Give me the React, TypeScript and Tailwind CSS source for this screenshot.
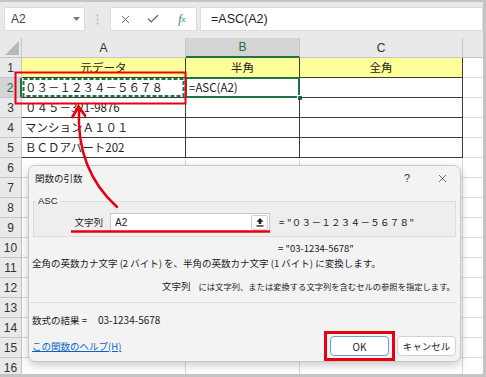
import { X, Check } from "lucide-react";

const JP = "font-['Noto_Sans_CJK_JP','Noto_Sans',sans-serif]";
const UI = "font-['Liberation_Sans','Noto_Sans',sans-serif]";

const data: string[][] = [
  ["元データ", "半角", "全角"],
  ["０３－１２３４－５６７８", "=ASC(A2)", ""],
  ["０４５－321-9876", "", ""],
  ["マンションＡ１０１", "", ""],
  ["ＢＣＤアパート202", "", ""],
];

const colWidths = ["w-[164px]", "w-[114px]", "w-[163px]"];

function FormulaBar() {
  return (
    <div className={`flex h-[36px] items-start bg-[#e9e9e9] pl-[4px] pt-[5px] ${UI}`}>
      <div className="flex h-[24px] w-[81px] items-center justify-between border border-[#dcdcdc] bg-white pl-[6px] pr-[4px] text-[12px] text-[#444]">
        <span>A2</span>
        <svg width="7" height="4" viewBox="0 0 7 4">
          <path d="M0 0h7L3.5 4z" fill="#777" />
        </svg>
      </div>
      <div className="flex h-[24px] w-[25px] items-center justify-center">
        <svg width="3" height="11" viewBox="0 0 3 11">
          <circle cx="1.5" cy="1.5" r="1" fill="#b0b0b0" />
          <circle cx="1.5" cy="5.5" r="1" fill="#b0b0b0" />
          <circle cx="1.5" cy="9.5" r="1" fill="#b0b0b0" />
        </svg>
      </div>
      <div className="flex h-[24px] w-[87px] items-center border border-[#dcdcdc] bg-white">
        <div className="flex w-[29px] justify-center text-[#5a5a5a]">
          <X size={13} strokeWidth={1.6} />
        </div>
        <div className="flex w-[29px] justify-center text-[#5a5a5a]">
          <Check size={14} strokeWidth={2} />
        </div>
        <div className="flex w-[29px] justify-center font-['Liberation_Serif',serif] text-[12px] italic text-[#2e8b57]">
          f<span className="text-[9px] leading-[18px]">x</span>
        </div>
      </div>
      <div className="ml-[3px] flex h-[24px] flex-1 items-center border border-[#dcdcdc] bg-white pl-[10px] text-[12.5px] text-[#222]">
        =ASC(A2)
      </div>
    </div>
  );
}

function ColumnHeader() {
  return (
    <div className={`flex h-[20px] ${UI} text-[12px] text-[#333]`}>
      <div className="flex w-[22px] items-end justify-end border-r border-b border-[#c6c6c6] bg-[#e9e9e9] pb-[2px] pr-[2px]">
        <svg width="14" height="14" viewBox="0 0 14 14">
          <path d="M0 14H14V0z" fill="#b8b8b8" />
        </svg>
      </div>
      <div className={`${colWidths[0]} flex items-center justify-center border-r border-b border-[#c6c6c6] bg-[#e9e9e9]`}>A</div>
      <div className={`${colWidths[1]} flex items-center justify-center border-r border-[#c6c6c6] border-b-2 border-b-[#217346] bg-[#d4d4d4] text-[#217346]`}>B</div>
      <div className={`${colWidths[2]} flex items-center justify-center border-r border-b border-[#c6c6c6] bg-[#e9e9e9]`}>C</div>
      <div className="flex-1 border-b border-[#c6c6c6] bg-[#e9e9e9]" />
    </div>
  );
}

function Row({ n }: { n: number }) {
  const values = data[n - 1] ?? ["", "", ""];
  const inTable = n <= 5;
  const active = n === 2;
  return (
    <div className="flex h-[20px]">
      <div
        className={`flex w-[22px] items-center justify-center border-b border-[#c6c6c6] ${UI} text-[12px] ${
          active
            ? "border-r-2 border-r-[#217346] bg-[#d4d4d4] text-[#217346]"
            : "border-r bg-[#e9e9e9] text-[#333]"
        }`}
      >
        {n}
      </div>
      {values.map((v, i) => (
        <div
          key={i}
          className={`relative flex items-center ${colWidths[i]} border-r border-b ${JP} text-[11.5px] text-[#222] ${
            inTable ? "border-[#3c3c3c]" : "border-[#dadada]"
          } ${n === 1 ? "justify-center bg-[#ffff99]" : "pl-[3px]"}`}
        >
          {v}
          {active && i === 0 && (
            <svg className="absolute inset-0" width="163" height="19" viewBox="0 0 163 19">
              <rect x="1.5" y="1" width="160" height="17" fill="none" stroke="#217346" strokeWidth="2" strokeDasharray="4 2" />
            </svg>
          )}
          {active && i === 1 && (
            <>
              <div className="absolute -top-[1px] -left-[1px] -right-[1px] -bottom-[1px] border-2 border-[#217346]" />
              <div className="absolute -right-[4px] -bottom-[4px] h-[6px] w-[6px] border border-white bg-[#217346]" />
            </>
          )}
        </div>
      ))}
      <div className="flex-1 border-b border-[#dadada]" />
    </div>
  );
}

function Sheet() {
  return (
    <div>
      <ColumnHeader />
      {Array.from({ length: 16 }, (_, i) => (
        <Row key={i} n={i + 1} />
      ))}
    </div>
  );
}

function FunctionDialog() {
  return (
    <div
      className={`absolute left-[28px] top-[165px] flex h-[197px] w-[433px] flex-col rounded-[7px] border border-[#c9c9c9] bg-[#f3f3f3] text-[9.5px] text-[#1b1b1b] shadow-[0_3px_10px_rgba(0,0,0,0.22)] ${JP}`}
    >
      <div className="flex h-[24px] items-center pl-[6px]">
        <span>関数の引数</span>
        <div className="ml-auto flex h-full">
          <div className={`flex w-[36px] items-center justify-center ${UI} text-[11px] text-[#333]`}>?</div>
          <div className="flex w-[35px] items-center justify-center text-[#333]">
            <X size={13} strokeWidth={1.3} />
          </div>
        </div>
      </div>

      <fieldset className="mx-[4px] mt-[6px] h-[41px] border border-[#dcdcdc] bg-[#eeeeee] pb-[4px]">
        <legend className={`ml-[2px] px-[2px] leading-[10px] ${UI}`}>ASC</legend>
        <div className="mt-[7px] flex h-[19px] items-center">
          <div className="w-[69px] text-right">文字列</div>
          <div className="ml-[7px] flex h-[19px] w-[160px] items-center border border-[#c8c8c8] border-b-[#8a8a8a] bg-white pl-[4px]">
            <span className={`${UI} text-[10px]`}>A2</span>
            <div className="ml-auto mr-[1px] flex h-[15px] w-[17px] items-center justify-center rounded-[2px] border border-[#d0d0d0] bg-[#fbfbfb]">
              <svg width="8" height="9" viewBox="0 0 8 9">
                <path d="M4 0L7.5 3.8H5.3V6H2.7V3.8H0.5z" fill="#222" />
                <rect x="0.5" y="7.3" width="7" height="1.3" fill="#222" />
              </svg>
            </div>
          </div>
          <div className="ml-[9px] whitespace-nowrap tracking-[0.3px]">= "０３－１２３４－５６７８"</div>
        </div>
      </fieldset>

      <div className="mt-[5px] h-[12px] pl-[249px] leading-[12px]">= "03-1234-5678"</div>
      <div className="mt-[3px] h-[12px] whitespace-nowrap pl-[3px] leading-[12px]">
        全角の英数カナ文字 (2 バイト) を、半角の英数カナ文字 (1 バイト) に変換します。
      </div>
      <div className="mt-[11px] flex h-[12px] items-center whitespace-nowrap pl-[133px] leading-[12px]">
        <span>文字列</span>
        <span className="ml-[8px] text-[8.3px]">には文字列、または変換する文字列を含むセルの参照を指定します。</span>
      </div>
      <div className="mr-[4px] mt-[10px] h-[1px] bg-[#dedede]" />
      <div className="mt-[11px] flex h-[12px] pl-[3px] leading-[12px]">
        <span>数式の結果 =</span>
        <span className="ml-[11px] text-[10px]">03-1234-5678</span>
      </div>
      <div className="mt-[10px] flex h-[20px] items-center pl-[3px] pr-[4px]">
        <span className="text-[#0b63c6] underline">この関数のヘルプ(H)</span>
        <button className="ml-auto flex h-[20px] w-[59px] items-center justify-center rounded-[4px] border border-[#6e9ed6] bg-white text-[10px] text-[#1b1b1b]">
          OK
        </button>
        <button className="ml-[8px] flex h-[20px] w-[59px] items-center justify-center rounded-[4px] border border-[#d2d2d2] bg-white text-[9.5px] text-[#1b1b1b]">
          キャンセル
        </button>
      </div>
    </div>
  );
}

function Annotations() {
  return (
    <svg className="pointer-events-none absolute inset-0" width="486" height="377" viewBox="0 0 486 377">
      <rect x="15.5" y="72.5" width="170" height="31" fill="none" stroke="#e60012" strokeWidth="2" />
      <path d="M117 207Q76 170 79 109" fill="none" stroke="#e60012" strokeWidth="2.5" strokeLinecap="round" />
      <path d="M72.5 117L78.5 106.5L85 115.5" fill="none" stroke="#e60012" strokeWidth="2.8" strokeLinejoin="miter" strokeLinecap="round" />
      <line x1="71" y1="231.5" x2="270" y2="231.5" stroke="#e60012" strokeWidth="2.5" />
      <rect x="325.5" y="332.5" width="68" height="27" fill="none" stroke="#e60012" strokeWidth="3" />
    </svg>
  );
}

export default function App() {
  return (
    <div className="relative h-[377px] w-[486px] overflow-hidden bg-[#c4c4c4] pt-[2px] pr-[3px] pb-[3px]">
      <div className="h-full overflow-hidden bg-white">
        <FormulaBar />
        <Sheet />
      </div>
      <FunctionDialog />
      <Annotations />
    </div>
  );
}
